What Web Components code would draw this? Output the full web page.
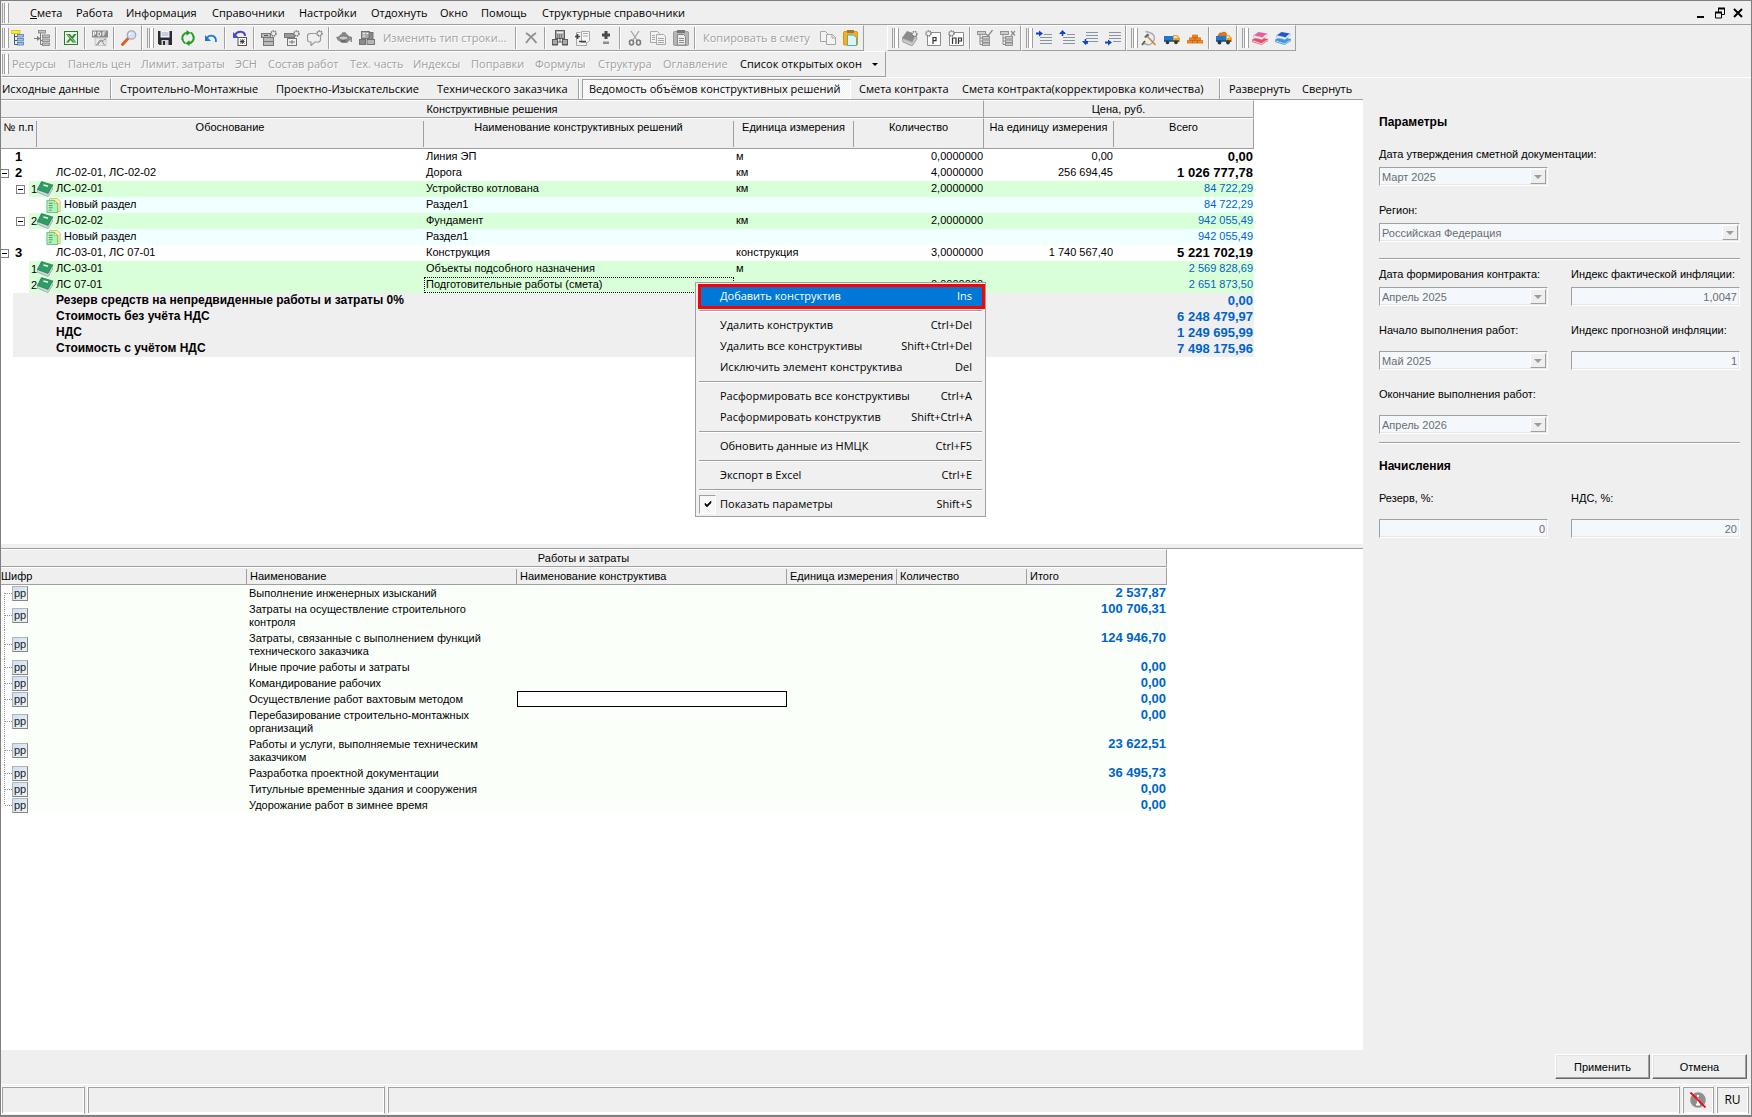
<!DOCTYPE html>
<html lang="ru">
<head>
<meta charset="utf-8">
<title>Ведомость объёмов конструктивных решений</title>
<style>
  html, body { margin: 0; height: 100%; }
  body {
    --face: #efefef; --shade: #a0a0a0; --dark: #7f7f7f; --light: #ffffff; --link: #0063cc;
    --ui: "Open Sans", "Noto Sans", sans-serif;
    --grid: "Liberation Sans", Arial, sans-serif;
    background: var(--face); color: #000; font: 11px/16px var(--ui); overflow: hidden;
  }
</style>
</head>
<body>
<estimate-app></estimate-app>

<script>
const ICONS = {
  tree: '<path d="M0 .5h9v3H0z" fill="#ffee1a" stroke="#b5a400" stroke-width=".6"/><path d="M3.5 4v10.500h3M3.500 10.500h3M3.500 6.500h3" fill="none" stroke="#4d5a63"/><g fill="#9ec7f0" stroke="#3c6ea5" stroke-width=".7"><rect x="6.500" y="4.500" width="6" height="2.500"/><rect x="6.500" y="8.500" width="6" height="2.500"/><rect x="6.500" y="12.500" width="6" height="2.500"/></g>',
  insrow: '<g fill="#c4c4c4" stroke="#7d7d7d" stroke-width=".8"><rect x="4.500" y=".5" width="7" height="2.500"/><rect x="8.500" y="5" width="7" height="2.500"/><rect x="8.500" y="9" width="7" height="2.500"/><rect x="8.500" y="13" width="7" height="2.500"/></g><path d="M6.500 3v11.500h2M6.500 10.500h2M0 8.500h4" fill="none" stroke="#7d7d7d"/><path d="M3 6l3.500 2.500L3 11z" fill="#7d7d7d"/>',
  excel: '<rect x="1.500" y="1.500" width="13" height="13" fill="#e9f5e6" stroke="#2d7a32"/><path d="M3 4h4l2 2.500L11 4h2.500L10 8.500l3.500 4h-4L7.500 10l-2 2.500H3l3.500-4z" fill="#2b8a35"/><path d="M4.500 4.500l7 7.500" stroke="#a8dca4"/>',
  pdf: '<rect x="0" y=".5" width="16" height="7" fill="#8b8b8b"/><path d="M1.500 6V2h2v2h-2M6 2v4h1.500l1-1V3l-1-1zM11 6V2h3M11 4h2" stroke="#fff" fill="none" stroke-width=".9"/><path d="M3 8h11v7.500H3z" fill="#e9e9e9" stroke="#b0b0b0" stroke-width=".6"/><path d="M4 15c3-1 2-5 5-5s1 5 4 5M6 15c0-3 6-5 8-6" fill="none" stroke="#8d8d8d"/>',
  find: '<path d="M1.500 14.500L7 8.500" stroke="#d9622b" stroke-width="3" stroke-linecap="round"/><circle cx="10.500" cy="5" r="4.200" fill="#cfe4fb" stroke="#a9a9b5" stroke-width="1.300"/><path d="M8.500 5a2 2 0 0 1 2-2" stroke="#fff" stroke-width="1.200" fill="none"/>',
  save: '<path d="M1 1h14v14H2.500L1 13.500z" fill="#2c2c30"/><rect x="3.500" y="1" width="9" height="6.500" fill="#f5f5f7"/><path d="M4.500 3h7M4.500 5h7" stroke="#7c93c9" stroke-width=".8"/><rect x="4.500" y="10" width="7" height="5" fill="#cfd2d8"/><rect x="6" y="11" width="2" height="4" fill="#2c2c30"/>',
  refresh: '<g fill="none" stroke="#25a325" stroke-width="2"><path d="M2.500 10C1.500 6.500 3.500 3 7.500 2.800"/><path d="M13.500 6c1 3.500-1 7-5 7.200"/></g><path d="M6.500 0l4 2.800-4 2.900zM9.500 16l-4-2.800 4-2.900z" fill="#1f9b1f"/><path d="M10.500 2.500q2.500 1 3 4.500M5.500 13.500q-2.500-1-3-4.500" fill="none" stroke="#1f9b1f" stroke-width="1.600"/>',
  undo: '<path d="M4 8C6 4.500 13.500 4.500 13 12" fill="none" stroke="#1976e0" stroke-width="1.800"/><path d="M2 5v6h6z" fill="#1976e0"/>',
  undoall: '<path d="M3 5C5 .5 13 .5 13 6" fill="none" stroke="#4747d8" stroke-width="2"/><path d="M1 2v6h6z" fill="#4747d8"/><rect x="6" y="7.500" width="8.500" height="8" fill="#fff" stroke="#555"/><path d="M8 9.500l4.500 4M12.500 9.500l-4.500 4M10.300 9v5M7.800 11.500h5" stroke="#222" stroke-width=".8"/>',
  gear1: '<g fill="#b9b9b9" stroke="#777"><rect x=".5" y="3.500" width="9" height="4"/><rect x="2.500" y="7.500" width="10" height="4"/><rect x="2.500" y="11.500" width="10" height="4"/></g><circle cx="12.500" cy="3.500" r="2.500" fill="#eee" stroke="#777" stroke-width="1.500" stroke-dasharray="1.500 .6"/><path d="M3 5.500h4" stroke="#555"/>',
  gear2: '<g fill="#999" stroke="#777"><rect x=".5" y="3.500" width="10" height="4"/><rect x="3.500" y="8.500" width="9" height="7" fill="#eee"/></g><path d="M5 12h6M8 10v4" stroke="#777"/><circle cx="12.500" cy="3.500" r="2.500" fill="#eee" stroke="#777" stroke-width="1.500" stroke-dasharray="1.500 .6"/>',
  note: '<path d="M9 3.500H3q-2.500 0-2.500 2.500v3.500q0 2.500 2.500 2.500h1v3.500L8 12h3q2.500 0 2.500-2.500V7" fill="none" stroke="#999" stroke-width="1.200"/><circle cx="12.500" cy="3.500" r="2.500" fill="#eee" stroke="#777" stroke-width="1.500" stroke-dasharray="1.500 .6"/>',
  helmet: '<path d="M0 7q3-.5 3.500-1.500Q5 3 8 3t5 3l3 1v5h-1.500V9.500L11 13H6L1.500 10z" fill="#8a8a8a"/><ellipse cx="7.500" cy="8" rx="4.500" ry="2" fill="#c9c9c9" stroke="#666" stroke-width=".7"/><path d="M6 3h4M5 11h5" stroke="#555"/>',
  blocks: '<g stroke="#6c6c6c" stroke-width=".9"><rect x="2.500" y="1.500" width="8" height="7" fill="#ababab"/><rect x="10" y="2.500" width="4" height="7" fill="#8b8b8b"/><rect x=".5" y="9.500" width="6" height="5" fill="#8b8b8b"/><rect x="8" y="9.500" width="7.500" height="5" fill="#b7b7b7"/></g><path d="M4 3.500h2M7.500 3.500h2M4 6h2" stroke="#f2f2f2"/>',
  cross: '<path d="M3 3q5 3 10.500 10M13 3Q8 6 3 13" stroke="#8f8f8f" stroke-width="1.900" fill="none"/>',
  calc: '<g fill="#a9a9a9" stroke="#5c5c5c"><rect x="3.500" y=".5" width="9" height="8"/><rect x=".5" y="9.500" width="5" height="5"/><rect x="10.500" y="9.500" width="5" height="5"/></g><path d="M5 2.500h6" stroke="#eee" stroke-width="1.500"/><path d="M5 5h6M5 7h6" stroke="#555" stroke-dasharray="1 1"/><path d="M5.500 12h5M8 9v3M0 15h6M10 15h6" stroke="#5c5c5c"/>',
  plusminus: '<path d="M6.500 1.500h8v9l-2 2h-6z" fill="#f6f6f6" stroke="#a6a6a6"/><path d="M1.500 15.500v-13h4M1.500 15.500h10v-3" stroke="#a6a6a6" fill="#f6f6f6"/><path d="M0 6.500h5M2.500 4v5M4 11.500h7" stroke="#444" stroke-width="1.600"/><path d="M8 3.500h5M8 6h5" stroke="#aaa"/>',
  updown: '<path d="M6.500 1h3v2.500H12v3H9.500V9h-3V6.500H4v-3h2.500z" fill="#4a4a4a"/><rect x="5" y="11.500" width="6" height="2.500" fill="#8f8f8f"/>',
  cut: '<path d="M4 1l6 9M12 1L6 10" stroke="#a5a5a5" stroke-width="1.300"/><g fill="none" stroke="#7c7c7c" stroke-width="1.600"><ellipse cx="4.500" cy="12.500" rx="2" ry="2.500"/><ellipse cx="11.500" cy="12.500" rx="2" ry="2.500"/></g>',
  copy: '<g fill="#f2f2f2" stroke="#a8a8a8"><path d="M.5 1.500h7l2 2v9h-9z"/><path d="M6.500 4.500h7l2 2v8h-9z"/></g><path d="M8 8.500h6M8 10.500h6M8 12.500h6M2 5.500h3M2 7.500h3M2 9.500h3" stroke="#a5a5a5"/>',
  paste: '<rect x=".5" y="1.500" width="15" height="14" rx="1" fill="#b5b5b5" stroke="#9b9b9b"/><rect x="4" y="0" width="8" height="3" fill="#777"/><path d="M4.500 4.500h6l2 2v8.500h-8z" fill="#ececec" stroke="#888"/><path d="M6 8.500h5M6 10.500h5M6 12.500h5" stroke="#8b8b8b"/>',
  copy2: '<g fill="#f3f3f3" stroke="#a5a5a5"><path d="M.5 1.500h5l2 2v8h-7z"/><path d="M6.500 4.500h6l3 3v7h-9z"/></g><path d="M12 4.500v3.500h3.500" fill="none" stroke="#a5a5a5"/>',
  paste2: '<rect x=".5" y="1.500" width="14" height="13.500" rx="1" fill="#f9ae17" stroke="#e39300"/><rect x="4" y="0" width="7" height="3" fill="#9b7a3d"/><path d="M4.500 5h6l3 2.500v8h-9z" fill="#d8f5f8" stroke="#5fa8b4"/>',
  book0: '<path d="M0 8L5 1l9 3-3 8z" fill="#8b8b8b"/><path d="M0 8l1 4 9 4 5-7-1-5-4 8z" fill="#c9c9c9" stroke="#8b8b8b" stroke-width=".7"/><circle cx="12.500" cy="4" r="2.400" fill="#eee" stroke="#777" stroke-width="1.400" stroke-dasharray="1.500 .6"/>',
  pageR: '<path d="M2.500 2.500h13v13h-13z" fill="#fdfdfd" stroke="#8b8b8b"/><circle cx="3.500" cy="3.500" r="2.500" fill="#eee" stroke="#777" stroke-width="1.400" stroke-dasharray="1.500 .6"/><path d="M8 14V7.500h3v3.200H8" fill="none" stroke="#333" stroke-width="1.200"/>',
  pagePR: '<path d="M1.500 2.500h14v13h-14z" fill="#fdfdfd" stroke="#8b8b8b"/><circle cx="3.500" cy="3.500" r="2.500" fill="#eee" stroke="#777" stroke-width="1.400" stroke-dasharray="1.500 .6"/><path d="M4.500 14V8h3.500v6M10.500 14V8h3v3h-3" fill="none" stroke="#333" stroke-width="1.200"/>',
  treeok: '<g fill="#ccc" stroke="#8a8a8a" stroke-width=".9"><rect x=".5" y="1.500" width="8" height="3"/><rect x="5.500" y="6.500" width="7" height="2.500"/><rect x="5.500" y="10" width="7" height="2.500"/><rect x="5.500" y="13" width="7" height="2.500"/></g><path d="M3 5v9.500h3M3 8h3M3 11h3" stroke="#8a8a8a" fill="none"/><path d="M9 4l2 2 4.500-6" fill="none" stroke="#8a8a8a" stroke-width="1.300"/>',
  treex: '<g fill="#ccc" stroke="#8a8a8a" stroke-width=".9"><rect x=".5" y="1.500" width="8" height="3"/><rect x="5.500" y="6.500" width="7" height="2.500"/><rect x="5.500" y="10" width="7" height="2.500"/><rect x="5.500" y="13" width="7" height="2.500"/></g><path d="M3 5v9.500h3M3 8h3M3 11h3" stroke="#8a8a8a" fill="none"/><path d="M11 1l4 4.500M15 1l-4 4.500" stroke="#8a8a8a" stroke-width="1.200"/>',
  in1: '<path d="M8 4.500h8M4 7.500h12M4 10.500h12M4 13.500h12" stroke="#8a93a3"/><path d="M0 3.500h4" stroke="#1040d0" stroke-width="2"/><path d="M3 .500l4 3-4 3z" fill="#1040d0"/>',
  in2: '<path d="M8 4.500h8M4 7.500h12M4 10.500h12M4 13.500h12" stroke="#8a93a3"/><path d="M3.500 6V3h2.500" fill="none" stroke="#1040d0" stroke-width="1.600"/><path d="M0 4l3.500-4L7 4z" fill="#1040d0"/>',
  in3: '<path d="M4 2.500h12M4 5.500h12M4 8.500h12M7 11.500h9" stroke="#8a93a3"/><path d="M3.500 9v4h2.500" fill="none" stroke="#1040d0" stroke-width="1.600"/><path d="M0 11l3.500 4L7 11z" fill="#1040d0"/>',
  in4: '<path d="M4 2.500h12M4 5.500h12M4 8.500h12M8 11.500h8" stroke="#8a93a3"/><path d="M0 12.500h4" stroke="#1040d0" stroke-width="2"/><path d="M3 9.500l4 3-4 3z" fill="#1040d0"/>',
  hammer: '<path d="M4.500 1.500Q15 3 13 10T3 13.500" fill="none" stroke="#a9aeb5" stroke-width="1.500"/><path d="M3 7l3.500-3.500L8.500 5 5 8z" fill="#5e6b70"/><path d="M6.500 6.500l8 8.500" stroke="#c98738" stroke-width="1.600"/><path d="M4 11l-3 4" stroke="#6c5a3a" stroke-width="1.800"/>',
  truck: '<path d="M0 6h9v5H0z" fill="#1e78d2"/><path d="M9 5h4l3 3v4H9z" fill="#f2a020"/><path d="M10 6h2.500l1.500 2h-4z" fill="#cdeaf8"/><path d="M0 11h15" stroke="#23486b" stroke-width="1.500"/><circle cx="3.500" cy="12.500" r="1.800" fill="#333"/><circle cx="12" cy="12.500" r="1.800" fill="#333"/>',
  bricks: '<g fill="#f58a1f" stroke="#c4600f" stroke-width=".6"><path d="M5.500 5h5v2.700h-5zM2.500 7.700h5.500v2.700H2.500zM8 7.700h5.500v2.700H8zM0 10.400h5.500v2.700H0zM5.500 10.400h5v2.700h-5zM10.500 10.400H16v2.700h-5.500z"/></g>',
  truck2: '<path d="M2 6q1-4 4-3 2-2 4 0l1 3z" fill="#e97a19" stroke="#b4540a" stroke-width=".6"/><path d="M0 6h10v5H0z" fill="#1e78d2"/><path d="M10 5h3l3 3v4h-6z" fill="#f2a020"/><path d="M11 6h1.500L14 8h-3z" fill="#cdeaf8"/><path d="M0 11h15" stroke="#23486b" stroke-width="1.500"/><circle cx="3.500" cy="12.500" r="1.900" fill="#333"/><circle cx="12" cy="12.500" r="1.900" fill="#333"/>',
  booksR: '<path d="M0 9.500L6 7l10 2-6 4.500z" fill="#e05068"/><path d="M0 10v1.500l9.500 3 6.500-4V9l-6.500 4z" fill="#fff" stroke="#e0506a" stroke-width=".8"/><path d="M1.500 5.500L6.500 2 15 3.500 10.500 7.500z" fill="#e45fa0"/><path d="M1.500 5.500v2L10 9.500l5-4v-2l-4.500 4z" fill="#fff" stroke="#d9a0b8" stroke-width=".7"/>',
  booksB: '<path d="M0 9.500L6 7l10 2-6 4.500z" fill="#3a9be0"/><path d="M0 10v1.500l9.500 3 6.500-4V9l-6.500 4z" fill="#fff" stroke="#2b86cc" stroke-width=".8"/><path d="M1.500 5.500L6.500 2 15 3.500 10.500 7.500z" fill="#2458c8"/><path d="M1.500 5.500v2L10 9.500l5-4v-2l-4.500 4z" fill="#fff" stroke="#9ab0d8" stroke-width=".7"/>',
  book: '<path d="M0 8.500V11l11 4.500 5-8V4z" fill="#d5d9de" stroke="#8a949c" stroke-width=".7"/><path d="M.3 8.500L4.500.6 15.700 4l-4.700 8.500z" fill="#2f9d66" stroke="#1c7a4b" stroke-width=".7"/><path d="M6.800 3.200l4.500 1.400-.8 1.500-4.500-1.500z" fill="#e9fff2"/>',
  sheet: '<path d="M4 .5h8l3 3v11H4z" fill="#fbf3a0" stroke="#c9b24a" stroke-width=".8"/><path d="M1 2.500h8l3.500 3.500v9.500H1z" fill="#a8f7b4" stroke="#68a070" stroke-width=".8"/><path d="M9 2.500V6h3.500z" fill="#fff" stroke="#68a070" stroke-width=".6"/><path d="M3 5.500h4M3 8h4M3 10.500h4M3 13h3" stroke="#6a8d78" stroke-width="1.100"/>',
  info: '<circle cx="8" cy="8" r="7.800" fill="#8f8f8f"/><path d="M8 3v2M8 6.500V12.500M6 12.500h4M6.500 7H8" stroke="#fff" stroke-width="1.800"/><path d="M.5.500l15 15" stroke="#f00" stroke-width="1.800"/>'
};

/* Base class: renders the class template into an open shadow root. */
class Base extends HTMLElement {
  constructor() { super(); this.attachShadow({ mode: 'open' }); }
  connectedCallback() { if (!this.shadowRoot.firstChild) this.shadowRoot.innerHTML = this.view(); }
}
const def = (name, view) => customElements.define(name, class extends Base { view() { return view(this); } });

def('ui-icon', el => `<style>:host{display:block;width:${el.getAttribute('size') || 16}px;height:${el.getAttribute('size') || 16}px;flex:none}svg{display:block;width:100%;height:100%}</style>
  <svg viewBox="0 0 16 16" aria-hidden="true">${ICONS[el.getAttribute('name')] || ''}</svg>`);

def('tool-band', () => `<style>
  :host{display:flex;align-items:center;height:24px;padding:0 1px 0 4px;border:1px solid var(--light);border-right-color:var(--shade);border-bottom-color:var(--shade);flex:none}
  :host([first]){padding-left:0}
  .grip{width:1px;height:20px;border:solid;border-width:0 1px;border-color:var(--light) var(--shade);box-shadow:3px 0 var(--light),4px 0 var(--shade);margin-right:3px;flex:none}
  :host([first]) .grip{margin-right:2px}
</style><span class="grip"></span><slot></slot>`);

def('tool-sep', () => `<style>:host{display:block;flex:none;width:1px;height:22px;margin:0 2px;background:var(--shade);border-right:1px solid var(--light)}</style>`);

def('tool-button', el => `<style>
  :host{display:block;flex:none}
  button{display:flex;align-items:center;justify-content:center;box-sizing:border-box;width:var(--w,23px);height:22px;padding:0;border:0;background:none;font:inherit;color:#000;white-space:nowrap}
  button:disabled{color:#a0a0a0;text-shadow:1px 1px #fff}
  .text{justify-content:flex-start;padding-left:5px}
  i{border:solid transparent;border-width:3px 3px 0;border-top-color:#000;margin-left:10px}
</style><button type="button" ${el.hasAttribute('disabled') ? 'disabled' : ''} ${el.hasAttribute('icon') ? `aria-label="${el.getAttribute('icon')}"` : 'class="text"'}>${
  el.hasAttribute('icon') ? `<ui-icon name="${el.getAttribute('icon')}"></ui-icon>` : `<slot></slot>${el.hasAttribute('drop') ? '<i></i>' : ''}`}</button>`);

def('app-menu', () => {
  const items = [['Смета', 46], ['Работа', 50], ['Информация', 86], ['Справочники', 87], ['Настройки', 72], ['Отдохнуть', 69], ['Окно', 41], ['Помощь', 61], ['Структурные справочники', 160]];
  return `<style>
  :host{display:flex;align-items:center;height:23px;border-bottom:1px solid var(--shade)}
  .grip{width:1px;height:20px;margin-left:1px;border:solid;border-width:0 1px;border-color:var(--light) var(--shade);box-shadow:3px 0 var(--light),4px 0 var(--shade)}
  nav{display:flex;padding-left:25px;flex:1}
  button{border:0;background:none;padding:0;font:inherit;text-align:left;white-space:nowrap;color:inherit}
  button:first-child::first-letter{text-decoration:underline}
  .win{display:flex;gap:6px;padding-right:7px}
  .win svg{display:block;width:12px;height:12px}
  </style><span class="grip"></span><nav>${items.map(([t, w]) => `<button type="button" style="width:${w}px">${t}</button>`).join('')}</nav>
  <div class="win">
   <button type="button" aria-label="minimize"><svg viewBox="0 0 12 12"><path d="M1 10h7" stroke="#000" stroke-width="2"/></svg></button>
   <button type="button" aria-label="restore"><svg viewBox="0 0 12 12"><path d="M4.500 5V1.500h6v6H8" fill="none" stroke="#000"/><path d="M4 1.500h7M1 5.500h7" stroke="#000" stroke-width="2"/><path d="M1.500 5v6h6V5" fill="none" stroke="#000"/></svg></button>
   <button type="button" aria-label="close"><svg viewBox="0 0 12 12"><path d="M2 2l8 8M10 2l-8 8" stroke="#000" stroke-width="2"/></svg></button>
  </div>`;
});

const btns = s => s.split(' ').map(n => n === '|' ? '<tool-sep></tool-sep>' : `<tool-button icon="${n}"></tool-button>`).join('');
def('tool-rows', () => {
  const second = [['Ресурсы', 56], ['Панель цен', 73], ['Лимит. затраты', 94], ['ЭСН', 33], ['Состав работ', 82], ['Тех. часть', 63], ['Индексы', 58], ['Поправки', 64], ['Формулы', 63], ['Структура', 65], ['Оглавление', 77]];
  return `<style>
  :host{display:block}
  .row{display:flex;height:26px}
  .gap{width:23px;flex:none}
  </style>
  <div class="row">
   <tool-band first>${btns('tree insrow | excel | pdf | find')}</tool-band>
   <tool-band>${btns('save refresh undo | undoall | gear1 gear2 note | helmet blocks')}<tool-button disabled style="--w:135px">Изменить тип строки...</tool-button>${btns('| cross | calc plusminus updown | cut copy paste |')}<tool-button disabled style="--w:118px">Копировать в смету</tool-button>${btns('copy2 paste2')}</tool-band>
   <span class="gap"></span>
   <tool-band>${btns('book0 pageR pagePR | treeok treex')}</tool-band>
   <tool-band>${btns('in1 in2 in3 in4')}</tool-band>
   <tool-band>${btns('hammer truck bricks | truck2')}</tool-band>
   <tool-band>${btns('booksR booksB')}</tool-band>
  </div>
  <div class="row">
   <tool-band first>${second.map(([t, w]) => `<tool-button disabled style="--w:${w}px">${t}</tool-button>`).join('')}<tool-button drop style="--w:149px">Список открытых окон</tool-button></tool-band>
  </div>`;
});

def('view-tabs', () => {
  const t = (s, w, on) => `<button type="button" role="tab" aria-selected="${!!on}" style="width:${w}px">${s}</button>`;
  return `<style>
  :host{display:flex;align-items:center;height:21px;border-top:1px solid var(--light);flex:none}
  button{box-sizing:border-box;height:20px;padding:0 0 0 7px;border:1px solid transparent;background:none;font:inherit;color:inherit;text-align:left;white-space:nowrap;flex:none}
  button:first-of-type{padding-left:0}
  [aria-selected=true]{padding-left:6px;border-color:var(--shade) var(--light) var(--light) var(--shade);background:repeating-conic-gradient(#fff 0 25%,#f0f0f0 0 50%) 0 0/2px 2px}
  span{width:1px;height:20px;margin-right:0;background:var(--shade);border-right:1px solid var(--light);flex:none}
  span.wide{margin-right:2px}
  </style>${t('Исходные данные', 109)}<span></span>${t('Строительно-Монтажные', 156)}${t('Проектно-Изыскательские', 161)}${t('Технического заказчика', 149)}<span class="wide"></span>${t('Ведомость объёмов конструктивных решений', 269, 1)}${t('Смета контракта', 103)}${t('Смета контракта(корректировка количества)', 265)}<span></span>${t('Развернуть', 73)}${t('Свернуть', 60)}`;
});

const GRID = `
  :host{display:block}
  table{border-collapse:separate;border-spacing:0;table-layout:fixed;font:11px/16px var(--grid)}
  th{box-sizing:border-box;padding:0;font-weight:normal;background:var(--face);border-top:1px solid var(--light);border-bottom:1px solid var(--shade);white-space:nowrap}
  td{padding:0 1px 0 2px;height:16px;white-space:nowrap;overflow:hidden}
  .r{text-align:right} .b{font-weight:bold;font-size:13px} .l{color:var(--link)}
  .end{border-right:1px solid var(--shade)}
  th span{display:block;border-right:1px solid var(--shade);box-shadow:1px 0 var(--light)}
`;

def('works-table', () => {
  // kind, toggle, number, icon, code, name, unit, quantity, price, total
  const rows = [
    ['a', 0, '1', '', '', 'Линия ЭП', 'м', '0,0000000', '0,00', '0,00'],
    ['a', 1, '2', '', 'ЛС-02-01, ЛС-02-02', 'Дорога', 'км', '4,0000000', '256 694,45', '1 026 777,78'],
    ['g', 1, '1', 'book', 'ЛС-02-01', 'Устройство котлована', 'км', '2,0000000', '', '84 722,29'],
    ['c', 0, '', 'sheet', 'Новый раздел', 'Раздел1', '', '', '', '84 722,29'],
    ['g', 1, '2', 'book', 'ЛС-02-02', 'Фундамент', 'км', '2,0000000', '', '942 055,49'],
    ['c', 0, '', 'sheet', 'Новый раздел', 'Раздел1', '', '', '', '942 055,49'],
    ['a', 1, '3', '', 'ЛС-03-01, ЛС 07-01', 'Конструкция', 'конструкция', '3,0000000', '1 740 567,40', '5 221 702,19'],
    ['g', 0, '1', 'book', 'ЛС-03-01', 'Объекты подсобного назначения', 'м', '', '', '2 569 828,69'],
    ['g f', 0, '2', 'book', 'ЛС 07-01', 'Подготовительные работы (смета)', '', '0,0000000', '', '2 651 873,50'],
    ['t', 0, '', '', 'Резерв средств на непредвиденные работы и затраты 0%', '', '', '', '', '0,00'],
    ['t', 0, '', '', 'Стоимость без учёта НДС', '', '', '', '', '6 248 479,97'],
    ['t', 0, '', '', 'НДС', '', '', '', '', '1 249 695,99'],
    ['t', 0, '', '', 'Стоимость с учётом НДС', '', '', '', '', '7 498 175,96']
  ];
  return `<style>${GRID}
  table{width:1253px}
  td{vertical-align:top;line-height:15px}
  .top th{height:18px} .sub th{height:31px;vertical-align:top;padding-top:2px}
  .sub span{height:26px;line-height:12px}
  .sub .end span{border:0;box-shadow:none}
  tr.g{background:linear-gradient(90deg,#fff 28px,#d8ffd8 28px)}
  tr.c{background:linear-gradient(90deg,#fff 43px,#f0ffff 43px)}
  tr.t{background:linear-gradient(90deg,#fff 12px,var(--face) 12px)}
  .tree{padding:0;overflow:visible}
  .tree div{display:grid;grid-template-columns:14px 22px 19px 1fr;align-items:center;height:16px;line-height:16px}
  .g .tree div{grid-template-columns:15px 15px 6px 19px 1fr}
  .c .tree div{grid-template-columns:45px 18px 1fr}
  .t .tree{font-weight:bold;font-size:12px}
  .code{align-self:start;line-height:14px}
  .a .no{font-weight:bold;font-size:13px}
  .tg{box-sizing:border-box;width:9px;height:9px;border:1px solid #808080;background:linear-gradient(#000,#000) center/5px 1px no-repeat #fff}
  .a .tg{width:8px;border-left:0}
  .f .nm{outline:1px dotted #000;outline-offset:-1px}
  </style>
  <table><colgroup><col style="width:36px"><col style="width:387px"><col style="width:310px"><col style="width:120px"><col style="width:130px"><col style="width:130px"><col style="width:140px"></colgroup>
  <thead><tr class="top"><th colspan="5" class="end">Конструктивные решения</th><th colspan="2" class="end">Цена, руб.</th></tr>
  <tr class="sub"><th><span>№ п.п</span></th><th><span>Обоснование</span></th><th><span>Наименование конструктивных решений</span></th><th><span>Единица измерения</span></th><th class="end"><span>Количество</span></th><th><span>На единицу измерения</span></th><th class="end"><span>Всего</span></th></tr></thead>
  <tbody>${rows.map(([k, tg, no, ic, code, nm, un, q, p, sum]) => {
    const toggle = tg ? '<span class="tg"></span>' : '<span></span>';
    const text = `<span class="code">${code}</span>`;
    const tree = k === 'a' ? `${toggle}<span class="no">${no}</span><span></span>${text}`
      : k[0] === 'g' ? `<span></span>${toggle}<span class="no">${no}</span><ui-icon name="${ic}"></ui-icon>${text}`
      : k === 'c' ? `<span></span><ui-icon name="${ic}" size="15"></ui-icon>${text}`
      : `<span></span><span></span><span></span>${text}`;
    return `<tr class="${k}"><td colspan="2" class="tree"><div>${tree}</div></td><td class="nm">${nm}</td><td>${un}</td><td class="r">${q}</td><td class="r">${p}</td><td class="r ${k === 'a' || k === 't' ? 'b' : ''} ${k === 'a' ? '' : 'l'}">${sum}</td></tr>`;
  }).join('')}</tbody></table>`;
});

def('costs-table', () => {
  const rows = [['Выполнение инженерных изысканий', '2 537,87'], ['Затраты на осуществление строительного контроля', '100 706,31', 2], ['Затраты, связанные с выполнением функций технического заказчика', '124 946,70', 2], ['Иные прочие работы и затраты', '0,00'], ['Командирование рабочих', '0,00'], ['Осуществление работ вахтовым методом', '0,00', 0, 1], ['Перебазирование строительно-монтажных организаций', '0,00', 2], ['Работы и услуги, выполняемые техническим заказчиком', '23 622,51', 2], ['Разработка проектной документации', '36 495,73'], ['Титульные временные здания и сооружения', '0,00'], ['Удорожание работ в зимнее время', '0,00']];
  return `<style>${GRID}
  table{width:1166px}
  th{height:18px;text-align:left} .top th{text-align:center}
  .sub span{height:15px;line-height:15px;padding-left:3px} .sub th:first-child span{padding-left:0} .sub .end span{border:0;box-shadow:none}
  tbody tr{background:linear-gradient(90deg,#fff 12px,#fafffa 12px)}
  td{vertical-align:top;white-space:normal}
  .n{padding-left:2px;padding-right:20px;line-height:16px}
  .two td{height:29px} .two .n{line-height:13px;padding-top:2px;padding-bottom:1px;height:26px}
  .k{padding:0;vertical-align:middle;background:repeating-linear-gradient(#909090 0 1px,transparent 1px 2px) 3px 0/1px 100% no-repeat,repeating-linear-gradient(90deg,#909090 0 1px,transparent 1px 2px) 4px 50%/8px 1px no-repeat}
  tr:first-child .k{background-position:3px 8px,4px 50%}
  tr:last-child .k{background-size:1px 8px,8px 1px}
  .k b{box-sizing:border-box;display:block;width:16px;height:15px;margin-left:11px;border:1px solid #858585;border-top-color:#b5b5b5;border-left-color:#b5b5b5;background:linear-gradient(135deg,#c9e0fa,#f2f2f0);color:#222;font-size:11px;line-height:12px;font-weight:normal;text-align:center}
  .cur{outline:1px solid #000;outline-offset:-1px;background:#fff}
  </style>
  <table><colgroup><col style="width:246px"><col style="width:270px"><col style="width:270px"><col style="width:110px"><col style="width:130px"><col style="width:140px"></colgroup>
  <thead><tr class="top"><th colspan="6" class="end">Работы и затраты</th></tr>
  <tr class="sub"><th><span>Шифр</span></th><th><span>Наименование</span></th><th><span>Наименование конструктива</span></th><th><span>Единица измерения</span></th><th><span>Количество</span></th><th class="end"><span>Итого</span></th></tr></thead>
  <tbody>${rows.map(([n, v, two, cur]) => `<tr class="${two ? 'two' : ''}"><td class="k"><b>pp</b></td><td class="n">${n}</td><td class="${cur ? 'cur' : ''}"></td><td></td><td></td><td class="r b l">${v}</td></tr>`).join('')}</tbody></table>`;
});

def('context-menu', () => {
  const items = [['Добавить конструктив', 'Ins'], 0, ['Удалить конструктив', 'Ctrl+Del'], ['Удалить все конструктивы', 'Shift+Ctrl+Del'], ['Исключить элемент конструктива', 'Del'], 0, ['Расформировать все конструктивы', 'Ctrl+A'], ['Расформировать конструктив', 'Shift+Ctrl+A'], 0, ['Обновить данные из НМЦК', 'Ctrl+F5'], 0, ['Экспорт в Excel', 'Ctrl+E'], 0, ['Показать параметры', 'Shift+S', 1]];
  return `<style>
  :host{display:block;box-sizing:border-box;width:291px;padding:3px 3px 1px;background:#f0f0f0;border:1px solid var(--shade)}
  button{display:flex;align-items:center;box-sizing:border-box;width:100%;height:21px;padding:0 10px 1px 0;border:0;background:none;font:inherit;color:#000}
  span{width:21px;flex:none} .t{width:auto;flex:1;text-align:left}
  hr{height:1px;margin:3px 0;border:0;border-top:1px solid var(--shade);background:#fff}
  .on{background:#0078d7;color:#fff;position:relative}
  .on::after{content:"";position:absolute;inset:-2px -3px -2px -1px;border:3px solid #f00}
  .ck{box-sizing:border-box;width:17px;height:19px;margin-right:4px;border:1px solid;border-color:var(--shade) #fff #fff var(--shade);background:repeating-conic-gradient(#fff 0 25%,#f0f0f0 0 50%) 0 0/2px 2px;display:flex;align-items:center;justify-content:center}
  svg{width:8px;height:8px}
  </style>${items.map((x, i) => x ? `<button type="button" role="menuitem" class="${i ? '' : 'on'}">${x[2] ? '<span class="ck"><svg viewBox="0 0 8 8"><path d="M1 3v2l2 2 4-4V1L3 5z" fill="#000" stroke="#000" stroke-width=".5"/></svg></span>' : '<span></span>'}<span class="t">${x[0]}</span>${x[1]}</button>` : '<hr>').join('')}`;
});

def('form-field', el => {
  const sel = el.hasAttribute('select'), v = el.getAttribute('value');
  return `<style>
  :host{display:flex;flex-direction:column;font:11px/16px var(--grid);gap:var(--gap,5px)}
  label{white-space:nowrap}
  .box{display:flex;box-sizing:border-box;height:19px;border:1px solid;border-color:var(--shade) #fff #fff var(--shade);background:#f4f8fc;box-shadow:inset -1px -1px #e6e6e6}
  select,input{appearance:none;flex:1;min-width:0;box-sizing:border-box;margin:0;padding:0 2px;border:0;background:none;font:11px/16px var(--grid);color:#6d6d6d;opacity:1;border-radius:0}
  input{text-align:right}
  i{box-sizing:border-box;width:16px;margin:1px;border:1px solid;border-color:#fff var(--shade) var(--shade) #fff;background:var(--face);display:flex;align-items:center;justify-content:center}
  i::before{content:"";border:solid transparent;border-width:4px 4px 0;border-top-color:#9a9a9a}
  </style><label for="f"><slot></slot></label><div class="box">${sel ? `<select id="f" disabled><option>${v}</option></select><i></i>` : `<input id="f" disabled value="${v}">`}</div>`;
});

def('params-panel', () => `<style>
  :host{display:block;box-sizing:border-box;padding:15px 10px 0 16px}
  h2{margin:0;font:bold 12px/16px var(--grid)}
  .grid{display:grid;grid-template-columns:169px 169px;column-gap:23px;row-gap:16px}
  .wide{grid-column:1/3}
  .late{--gap:13px}
  .line{grid-column:1/3;height:1px;border-top:1px solid var(--shade);background:#fff}
  </style><h2>Параметры</h2>
  <div class="grid" style="margin-top:16px">
   <form-field select value="Март 2025">Дата утверждения сметной документации:</form-field>
   <form-field class="wide" select value="Российская Федерация">Регион:</form-field>
  </div>
  <div class="grid" style="margin:16px 0 6px"><div class="line"></div></div>
  <div class="grid">
   <form-field select value="Апрель 2025">Дата формирования контракта:</form-field>
   <form-field value="1,0047">Индекс фактической инфляции:</form-field>
   <form-field class="late" select value="Май 2025">Начало выполнения работ:</form-field>
   <form-field class="late" value="1">Индекс прогнозной инфляции:</form-field>
   <form-field class="late" select value="Апрель 2026">Окончание выполнения работ:</form-field>
  </div>
  <div class="grid" style="margin:8px 0 14px"><div class="line"></div></div>
  <h2>Начисления</h2>
  <div class="grid late" style="margin-top:16px">
   <form-field value="0">Резерв, %:</form-field>
   <form-field value="20">НДС, %:</form-field>
  </div>`);

def('push-button', () => `<style>:host{display:block}
  button{display:block;width:95px;height:25px;padding:0;border:1px solid;border-color:#fff #696969 #696969 #fff;box-shadow:inset -1px -1px #a0a0a0,inset 1px 1px #e3e3e3;background:var(--face);font:11px/16px var(--grid);color:#000}</style><button type="button"><slot></slot></button>`);

def('status-bar', () => `<style>
  :host{display:flex;gap:2px;height:28px;padding:1px 2px 1px 0;border-top:1px solid #fff;flex:none}
  div{display:flex;align-items:center;justify-content:center;box-sizing:border-box;border:1px solid;border-color:#fff var(--shade) #fff #fff;box-shadow:inset 1px 1px var(--shade),inset -1px -1px #fff;font-size:12px}
  </style><div style="width:84px"></div><div style="width:298px"></div><div style="flex:1"></div><div style="width:32px"><ui-icon name="info"></ui-icon></div><div style="width:33px">RU</div>`);

def('estimate-app', () => `<style>
  :host{display:flex;flex-direction:column;box-sizing:border-box;height:100vh;border:1px solid var(--dark);border-bottom-width:2px;background:var(--face)}
  .main{flex:1;display:flex;min-height:0}
  .panes{flex:1;display:flex;flex-direction:column;min-width:0}
  .pane{background:#fff;border-top:1px solid var(--shade)}
  .up{position:relative;height:444px;flex:none}
  .low{flex:1;margin-top:4px;min-height:0}
  context-menu{position:absolute;left:694px;top:182px}
  params-panel{width:388px;flex:none}
  footer{display:flex;justify-content:flex-end;gap:2px;height:25px;padding:4px 4px 5px;flex:none}
  </style>
  <app-menu></app-menu><tool-rows></tool-rows><view-tabs></view-tabs>
  <div class="main">
   <div class="panes">
    <div class="pane up"><works-table></works-table><context-menu></context-menu></div>
    <div class="pane low"><costs-table></costs-table></div>
   </div>
   <params-panel></params-panel>
  </div>
  <footer><push-button>Применить</push-button><push-button>Отмена</push-button></footer>
  <status-bar></status-bar>`);
</script>
</body>
</html>
